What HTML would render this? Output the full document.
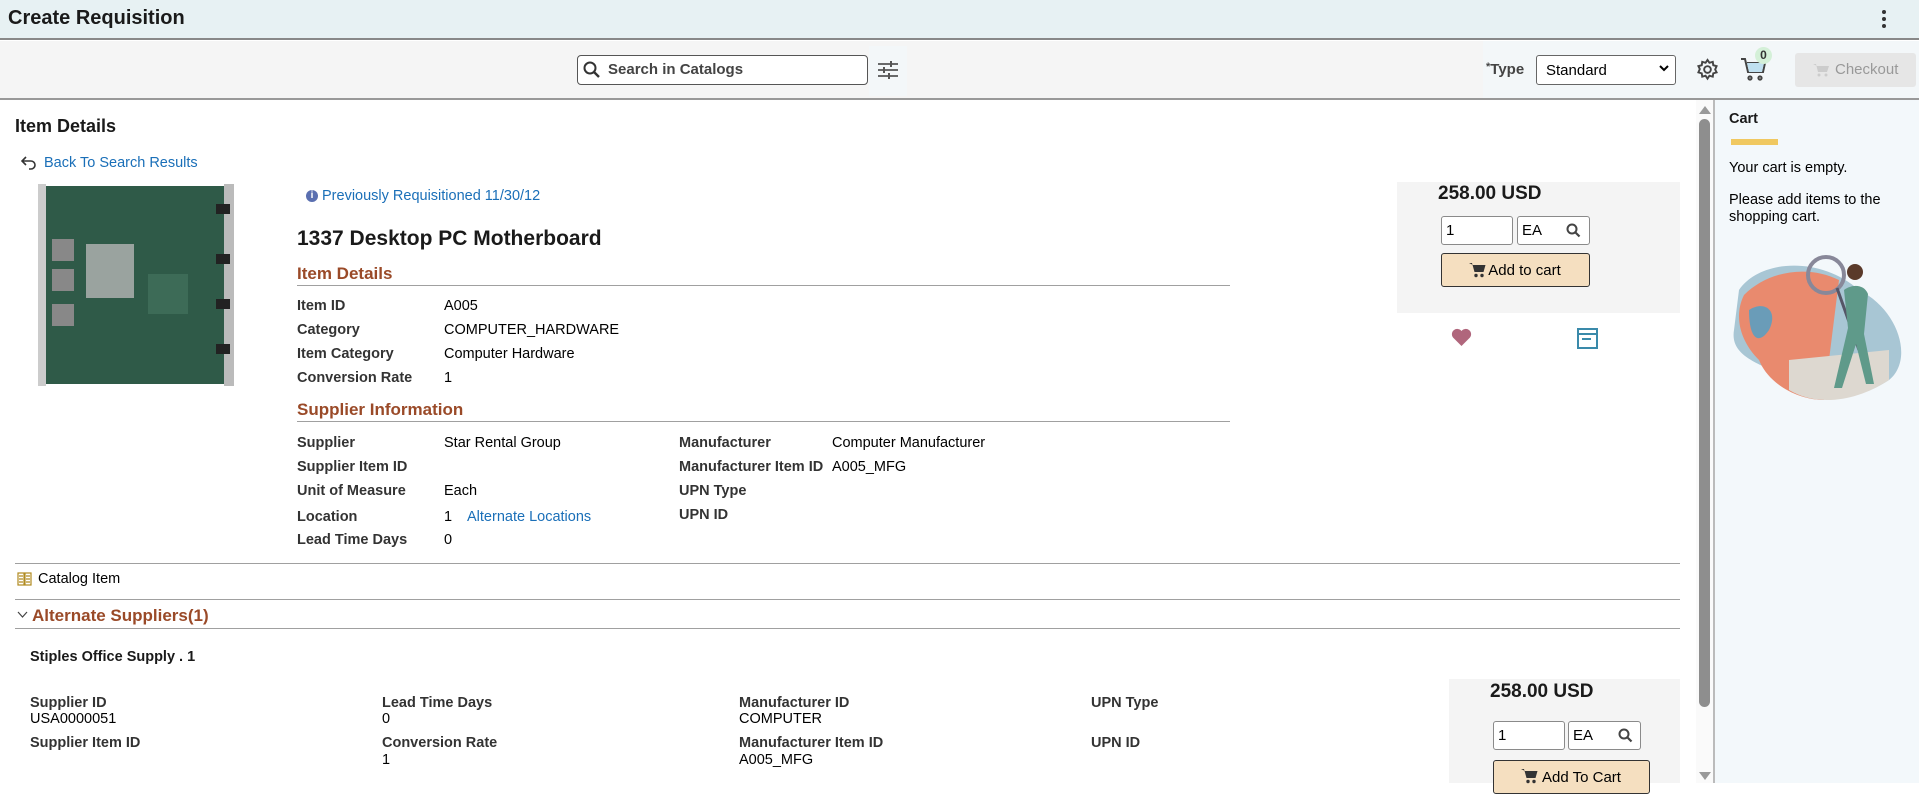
<!DOCTYPE html>
<html><head><meta charset="utf-8"><style>
*{box-sizing:border-box;margin:0;padding:0}
body{width:1919px;height:783px;overflow:hidden;position:relative;font-family:"Liberation Sans",Arial,sans-serif;background:#fff;color:#000;font-size:14.5px}
.a{position:absolute;white-space:nowrap}
.lb{font-weight:bold;color:#333}
.sec{color:#9a4a28;font-weight:bold;font-size:17px}
.ln{position:absolute;height:1px;background:#a0a0a0}
.lnk{color:#1a6fb8}
.inp{position:absolute;border:1px solid #8a8a8a;border-radius:3px;background:#fff;font-size:15px;padding:5px 4px}
.btn{position:absolute;border:1px solid #333;border-radius:3px;background:#f5dfc0;font-size:15px;text-align:center}
</style></head><body>
<div class="a" style="left:0;top:0;width:1919px;height:40px;background:#e7f1f3;border-bottom:2px solid #888"></div>
<div class="a" style="left:8px;top:7px;font-size:20px;font-weight:bold;color:#1a1a1a">Create Requisition</div>
<div class="a" style="left:1882px;top:10px;width:4px;height:4px;border-radius:2px;background:#333;box-shadow:0 7px 0 #333,0 14px 0 #333"></div>
<div class="a" style="left:0;top:41px;width:1483px;height:57px;background:#f5f5f5"></div>
<div class="a" style="left:1483px;top:41px;width:436px;height:57px;background:#f3f7f9"></div>
<div class="a" style="left:0;top:98px;width:1919px;height:2px;background:#999"></div>
<div class="a" style="left:577px;top:55px;width:291px;height:30px;border:1px solid #555;border-radius:4px;background:#fff"></div>
<svg class="a" style="left:583px;top:61px" width="18" height="18" viewBox="0 0 18 18"><circle cx="7" cy="7" r="5.5" fill="none" stroke="#333" stroke-width="2"/><path d="M11 11l5 5" stroke="#333" stroke-width="2.4"/></svg>
<div class="a" style="left:608px;top:61px;font-size:15px;font-weight:bold;color:#444">Search in Catalogs</div>
<div class="a" style="left:869px;top:46px;width:38px;height:50px;background:#f3f7f9"></div>
<svg class="a" style="left:877px;top:60px" width="22" height="20" viewBox="0 0 22 20" stroke="#555" stroke-width="1.8"><path d="M1 4h20M1 10h20M1 16h20"/><path d="M14 1v6M7 7v6M12 13v6" stroke-width="2"/></svg>
<div class="a" style="left:1486px;top:61px;font-size:15px;font-weight:bold;color:#444"><span style="font-size:11px;vertical-align:top">*</span>Type</div>
<div class="a" style="left:1536px;top:55px;width:140px;height:30px;border:1px solid #666;border-radius:3px;background:#fff;font-size:15px;padding:6px 9px">Standard</div>
<svg class="a" style="left:1659px;top:65px" width="10" height="8" viewBox="0 0 10 8"><path d="M1 1l4 4 4-4" fill="none" stroke="#000" stroke-width="2"/></svg>
<svg class="a" style="left:1696px;top:58px" width="23" height="23" viewBox="0 0 24 24" fill="none" stroke="#444" stroke-width="2"><circle cx="12" cy="12" r="3.5"/><path d="M12 2l2 3 3.5-1 .5 3.5 3.5 1-1.5 3.5 1.5 3-3.5 1-.5 3.5-3.5-1-2 3-2-3-3.5 1-.5-3.5-3.5-1 1.5-3.5L2.5 8.5l3.5-1 .5-3.5 3.5 1z"/></svg>
<svg class="a" style="left:1740px;top:57px" width="27" height="25" viewBox="0 0 27 25" fill="none" stroke="#444" stroke-width="2"><path d="M1 2h4l3 13h15l2-9H7" /><path d="M7 6h17l-2 9H9z" fill="#bfe0f0" stroke="none"/><circle cx="10" cy="21" r="1.6"/><circle cx="20" cy="21" r="1.6"/></svg>
<div class="a" style="left:1755px;top:47px;width:17px;height:17px;border-radius:9px;background:#d4f0d8;font-size:12px;text-align:center;line-height:17px;font-weight:bold;color:#333">0</div>
<div class="a" style="left:1795px;top:53px;width:121px;height:34px;background:#e6e6e6;border-radius:3px;color:#999;font-size:15px;padding:8px 0 0 40px">Checkout</div>
<svg class="a" style="left:1813px;top:63px" width="16" height="14" viewBox="0 0 16 14" fill="#ccc"><path d="M0 1h3l2 8h9l2-6H4z"/><circle cx="6" cy="12" r="1.5"/><circle cx="13" cy="12" r="1.5"/></svg>

<!-- main -->
<div class="a" style="left:15px;top:116px;font-size:18px;font-weight:bold;color:#1a1a1a">Item Details</div>
<svg class="a" style="left:21px;top:156px" width="16" height="14" viewBox="0 0 16 14" fill="none" stroke="#333" stroke-width="1.6"><path d="M5 1L1 5l4 4M1 5h9a4 4 0 010 8H8"/></svg>
<div class="a lnk" style="left:44px;top:155px;font-size:14.5px">Back To Search Results</div>
<!-- pcb -->
<div class="a" style="left:38px;top:184px;width:196px;height:202px;">
 <div class="a" style="left:0;top:0;width:8px;height:202px;background:#ccc"></div>
 <div class="a" style="left:8px;top:2px;width:180px;height:198px;background:#2f5a48"></div>
 <div class="a" style="left:186px;top:0;width:10px;height:202px;background:#bbb"></div>
 <div class="a" style="left:14px;top:55px;width:22px;height:22px;background:#888"></div>
 <div class="a" style="left:14px;top:85px;width:22px;height:22px;background:#888"></div>
 <div class="a" style="left:14px;top:120px;width:22px;height:22px;background:#888"></div>
 <div class="a" style="left:48px;top:60px;width:48px;height:54px;background:#9aa39f"></div>
 <div class="a" style="left:110px;top:90px;width:40px;height:40px;background:#3d6b57"></div>
 <div class="a" style="left:178px;top:20px;width:14px;height:10px;background:#222"></div>
 <div class="a" style="left:178px;top:70px;width:14px;height:10px;background:#222"></div>
 <div class="a" style="left:178px;top:115px;width:14px;height:10px;background:#222"></div>
 <div class="a" style="left:178px;top:160px;width:14px;height:10px;background:#222"></div>
</div>
<div class="a" style="left:306px;top:190px;width:12px;height:12px;border-radius:6px;background:#5a6fb0;color:#fff;font-size:10px;font-weight:bold;text-align:center;line-height:12px">i</div>
<div class="a lnk" style="left:322px;top:188px;font-size:14.5px">Previously Requisitioned 11/30/12</div>
<div class="a" style="left:297px;top:227px;font-size:21px;font-weight:bold;color:#1a1a1a">1337 Desktop PC Motherboard</div>
<div class="a sec" style="left:297px;top:264px">Item Details</div>
<div class="ln" style="left:297px;top:285px;width:933px"></div>
<div class="a lb" style="left:297px;top:298px">Item ID</div><div class="a" style="left:444px;top:298px">A005</div>
<div class="a lb" style="left:297px;top:322px">Category</div><div class="a" style="left:444px;top:322px">COMPUTER_HARDWARE</div>
<div class="a lb" style="left:297px;top:346px">Item Category</div><div class="a" style="left:444px;top:346px">Computer Hardware</div>
<div class="a lb" style="left:297px;top:370px">Conversion Rate</div><div class="a" style="left:444px;top:370px">1</div>
<div class="a sec" style="left:297px;top:400px">Supplier Information</div>
<div class="ln" style="left:297px;top:421px;width:933px"></div>
<div class="a lb" style="left:297px;top:435px">Supplier</div><div class="a" style="left:444px;top:435px">Star Rental Group</div>
<div class="a lb" style="left:297px;top:459px">Supplier Item ID</div>
<div class="a lb" style="left:297px;top:483px">Unit of Measure</div><div class="a" style="left:444px;top:483px">Each</div>
<div class="a lb" style="left:297px;top:509px">Location</div><div class="a" style="left:444px;top:509px">1</div><div class="a lnk" style="left:467px;top:509px">Alternate Locations</div>
<div class="a lb" style="left:297px;top:532px">Lead Time Days</div><div class="a" style="left:444px;top:532px">0</div>
<div class="a lb" style="left:679px;top:435px">Manufacturer</div><div class="a" style="left:832px;top:435px">Computer Manufacturer</div>
<div class="a lb" style="left:679px;top:459px">Manufacturer Item ID</div><div class="a" style="left:832px;top:459px">A005_MFG</div>
<div class="a lb" style="left:679px;top:483px">UPN Type</div>
<div class="a lb" style="left:679px;top:507px">UPN ID</div>
<!-- price box -->
<div class="a" style="left:1397px;top:182px;width:283px;height:131px;background:#f4f4f4"></div>
<div class="a" style="left:1438px;top:183px;font-size:19px;font-weight:bold;color:#1a1a1a">258.00 USD</div>
<div class="inp" style="left:1441px;top:216px;width:72px;height:29px">1</div>
<div class="inp" style="left:1517px;top:216px;width:73px;height:29px">EA</div>
<svg class="a" style="left:1566px;top:223px" width="15" height="15" viewBox="0 0 15 15"><circle cx="6" cy="6" r="4.5" fill="none" stroke="#444" stroke-width="2"/><path d="M9.5 9.5l4 4" stroke="#444" stroke-width="2.2"/></svg>
<div class="btn" style="left:1441px;top:253px;width:149px;height:34px;padding-top:8px;padding-left:18px">Add to cart</div>
<svg class="a" style="left:1469px;top:262px" width="17" height="16" viewBox="0 0 17 16" fill="#333"><path d="M0 1h3l2.5 9h9l2-7H4z"/><circle cx="7" cy="13.5" r="1.7"/><circle cx="13" cy="13.5" r="1.7"/></svg>
<svg class="a" style="left:1451px;top:328px" width="21" height="19" viewBox="0 0 21 19"><path d="M10.5 18L2 9.5A5 5 0 0110.5 3 5 5 0 0119 9.5z" fill="#b0667c"/></svg>
<svg class="a" style="left:1577px;top:328px" width="21" height="21" viewBox="0 0 21 21" fill="none" stroke="#3a8aaa" stroke-width="2"><rect x="1" y="1" width="19" height="19"/><path d="M1 6h19M5 11h9"/></svg>

<div class="ln" style="left:15px;top:563px;width:1665px"></div>
<svg class="a" style="left:17px;top:572px" width="15" height="14" viewBox="0 0 15 14" fill="none" stroke="#b08a20" stroke-width="1.2"><rect x="1" y="1" width="6" height="12"/><rect x="8" y="1" width="6" height="12"/><path d="M2 4h4M2 7h4M2 10h4M9 4h4M9 7h4M9 10h4"/></svg>
<div class="a" style="left:38px;top:571px">Catalog Item</div>
<div class="ln" style="left:15px;top:599px;width:1665px"></div>
<svg class="a" style="left:17px;top:611px" width="11" height="8" viewBox="0 0 11 8"><path d="M1 1l4.5 5L10 1" fill="none" stroke="#444" stroke-width="1.2"/></svg>
<div class="a sec" style="left:32px;top:606px">Alternate Suppliers(1)</div>
<div class="ln" style="left:15px;top:628px;width:1665px"></div>
<div class="a" style="left:30px;top:649px;font-weight:bold;color:#1a1a1a">Stiples Office Supply . 1</div>
<div class="a lb" style="left:30px;top:695px">Supplier ID</div><div class="a" style="left:30px;top:711px">USA0000051</div>
<div class="a lb" style="left:30px;top:735px">Supplier Item ID</div>
<div class="a lb" style="left:382px;top:695px">Lead Time Days</div><div class="a" style="left:382px;top:711px">0</div>
<div class="a lb" style="left:382px;top:735px">Conversion Rate</div><div class="a" style="left:382px;top:752px">1</div>
<div class="a lb" style="left:739px;top:695px">Manufacturer ID</div><div class="a" style="left:739px;top:711px">COMPUTER</div>
<div class="a lb" style="left:739px;top:735px">Manufacturer Item ID</div><div class="a" style="left:739px;top:752px">A005_MFG</div>
<div class="a lb" style="left:1091px;top:695px">UPN Type</div>
<div class="a lb" style="left:1091px;top:735px">UPN ID</div>
<div class="a" style="left:1449px;top:679px;width:231px;height:104px;background:#f4f4f4"></div>
<div class="a" style="left:1490px;top:681px;font-size:19px;font-weight:bold;color:#1a1a1a">258.00 USD</div>
<div class="inp" style="left:1493px;top:721px;width:72px;height:29px">1</div>
<div class="inp" style="left:1568px;top:721px;width:73px;height:29px">EA</div>
<svg class="a" style="left:1618px;top:728px" width="15" height="15" viewBox="0 0 15 15"><circle cx="6" cy="6" r="4.5" fill="none" stroke="#444" stroke-width="2"/><path d="M9.5 9.5l4 4" stroke="#444" stroke-width="2.2"/></svg>
<div class="btn" style="left:1493px;top:760px;width:157px;height:34px;padding-top:8px;padding-left:20px">Add To Cart</div>
<svg class="a" style="left:1521px;top:768px" width="17" height="16" viewBox="0 0 17 16" fill="#333"><path d="M0 1h3l2.5 9h9l2-7H4z"/><circle cx="7" cy="13.5" r="1.7"/><circle cx="13" cy="13.5" r="1.7"/></svg>

<!-- scrollbar -->
<div class="a" style="left:1696px;top:100px;width:18px;height:683px;background:#fafafa"></div>
<svg class="a" style="left:1698px;top:105px" width="14" height="10" viewBox="0 0 14 10"><path d="M1 9L7 1l6 8z" fill="#999"/></svg>
<div class="a" style="left:1699px;top:119px;width:11px;height:588px;border-radius:6px;background:#8e8e8e"></div>
<svg class="a" style="left:1698px;top:771px" width="14" height="10" viewBox="0 0 14 10"><path d="M1 1h12L7 9z" fill="#999"/></svg>
<!-- cart panel -->
<div class="a" style="left:1713px;top:100px;width:2px;height:683px;background:#bbb"></div>
<div class="a" style="left:1715px;top:100px;width:204px;height:683px;background:#f3f8fb"></div>
<div class="a" style="left:1729px;top:111px;font-size:14.5px;font-weight:bold;color:#1a1a1a">Cart</div>
<div class="a" style="left:1731px;top:139px;width:47px;height:6px;background:#f0c860"></div>
<div class="a" style="left:1729px;top:160px;font-size:14.5px">Your cart is empty.</div>
<div class="a" style="left:1729px;top:192px;font-size:14.5px;line-height:17px;white-space:normal;width:180px">Please add items to the shopping cart.</div>
<svg class="a" style="left:1729px;top:250px" width="178" height="155" viewBox="0 0 178 155">
 <path d="M10 40C30 10 90 5 130 40 170 60 185 110 160 130 130 150 80 160 60 130 40 115 0 110 5 80z" fill="#a8c6d4"/>
 <path d="M15 45C40 20 80 15 110 30L95 150C70 150 40 135 30 110 10 90 5 65 15 45z" fill="#e98a6e"/>
 <path d="M60 110L160 100 160 130C130 150 90 158 60 140z" fill="#ddd8d0"/>
 <path d="M20 60C35 50 50 60 40 80 30 95 20 90 20 60z" fill="#6a9cb8"/>
 <circle cx="97" cy="25" r="18" fill="none" stroke="#889" stroke-width="4"/>
 <path d="M108 38L130 100" stroke="#556" stroke-width="3"/>
 <path d="M115 40c8-6 20-6 24 4l-4 40 10 50h-8l-10-40-14 44h-8l14-60z" fill="#5f9a8a"/>
 <circle cx="126" cy="22" r="8" fill="#5a3a2a"/>
</svg>
</body></html>
